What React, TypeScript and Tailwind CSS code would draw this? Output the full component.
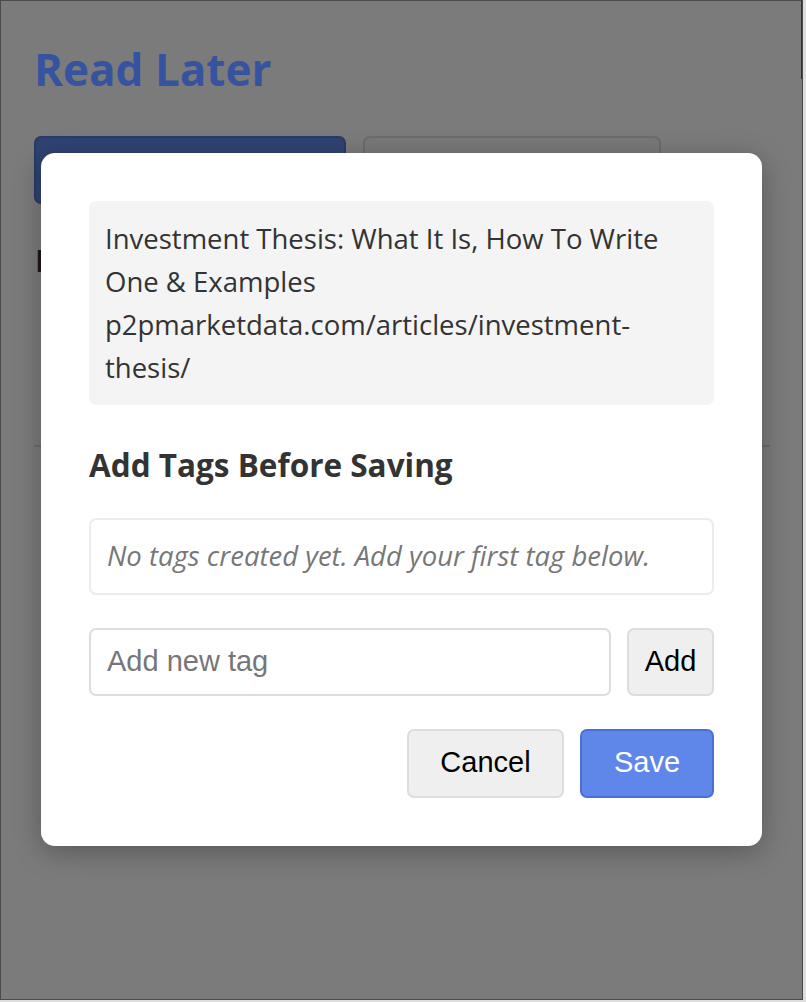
import { useState } from 'react';

export default function App() {
  const [newTag, setNewTag] = useState('');

  return (
    <div className="flex w-full h-[1002px] bg-[#dedede] font-['Open_Sans',sans-serif]">
      <div className="relative w-[803px] h-[1000px] border border-[#4a4a4a] bg-[#7b7b7b] overflow-hidden">
        {/* Page behind the dialog (dimmed) */}
        <div className="pl-[33px] pr-[32px]">
          <h1 className="pt-[38px] text-[44px] leading-[60px] font-bold text-[#3653a0]">
            Read Later
          </h1>
          <div className="mt-[37px] flex gap-[17px]">
            <button className="w-[312px] h-[68px] rounded-[7px] bg-[#2f4372] border-2 border-[#283a66] text-[#7b7b7b] text-[26px]">
              Save Current Page
            </button>
            <button className="w-[298px] h-[68px] rounded-[7px] bg-[#797979] border-2 border-[#6c6c6c] text-[#1a1a1a] text-[26px]">
              Manage Tags
            </button>
          </div>
          <h2 className="mt-[35px] pl-[1px] text-[31px] leading-[42px] font-bold text-[#181818]">List</h2>
          <div className="mt-[164px] border-t-2 border-[#6b6b6b]" />
        </div>

        {/* Dialog */}
        <div className="absolute inset-0 flex items-center justify-center">
          <div className="w-[721px] bg-white rounded-[14px] shadow-[0_6px_28px_rgba(0,0,0,0.28)] p-[48px] -mt-[2px]">
            <div className="bg-[#f4f4f4] rounded-[7px] p-[16px] text-[27.5px] leading-[43px] text-[#333]">
              <div>Investment Thesis: What It Is, How To Write One &amp; Examples</div>
              <div className="break-words">p2pmarketdata.com/articles/investment-thesis/</div>
            </div>

            <h3 className="mt-[40px] mb-[1px] text-[31.5px] leading-[40px] font-bold text-[#333]">
              Add Tags Before Saving
            </h3>

            <div className="mt-[33px] h-[77px] border-2 border-[#ececec] rounded-[7px] px-[16px] flex items-center">
              <p className="italic text-[27.5px] text-[#777]">
                No tags created yet. Add your first tag below.
              </p>
            </div>

            <div className="mt-[33px] flex gap-[16px]">
              <input
                value={newTag}
                onChange={(e) => setNewTag(e.target.value)}
                placeholder="Add new tag"
                className="flex-1 h-[68px] border-2 border-[#dddddd] rounded-[7px] px-[16px] text-[29px] font-['Liberation_Sans',Arial,sans-serif] text-[#111] placeholder:text-[#767676] outline-none"
              />
              <button className="w-[87px] h-[68px] bg-[#efefef] border-2 border-[#dddddd] rounded-[7px] text-[29px] font-['Liberation_Sans',Arial,sans-serif] text-black">
                Add
              </button>
            </div>

            <div className="mt-[33px] flex justify-end gap-[16px]">
              <button className="w-[157px] h-[69px] bg-[#efefef] border-2 border-[#dddddd] rounded-[7px] text-[29px] font-['Liberation_Sans',Arial,sans-serif] text-black">
                Cancel
              </button>
              <button className="w-[134px] h-[69px] bg-[#5f87ea] border-2 border-[#4a70d6] rounded-[7px] text-[29px] font-['Liberation_Sans',Arial,sans-serif] text-white">
                Save
              </button>
            </div>
          </div>
        </div>

        <div className="absolute top-0 right-0 w-[1px] h-[78px] bg-[#333]" />
      </div>
    </div>
  );
}
